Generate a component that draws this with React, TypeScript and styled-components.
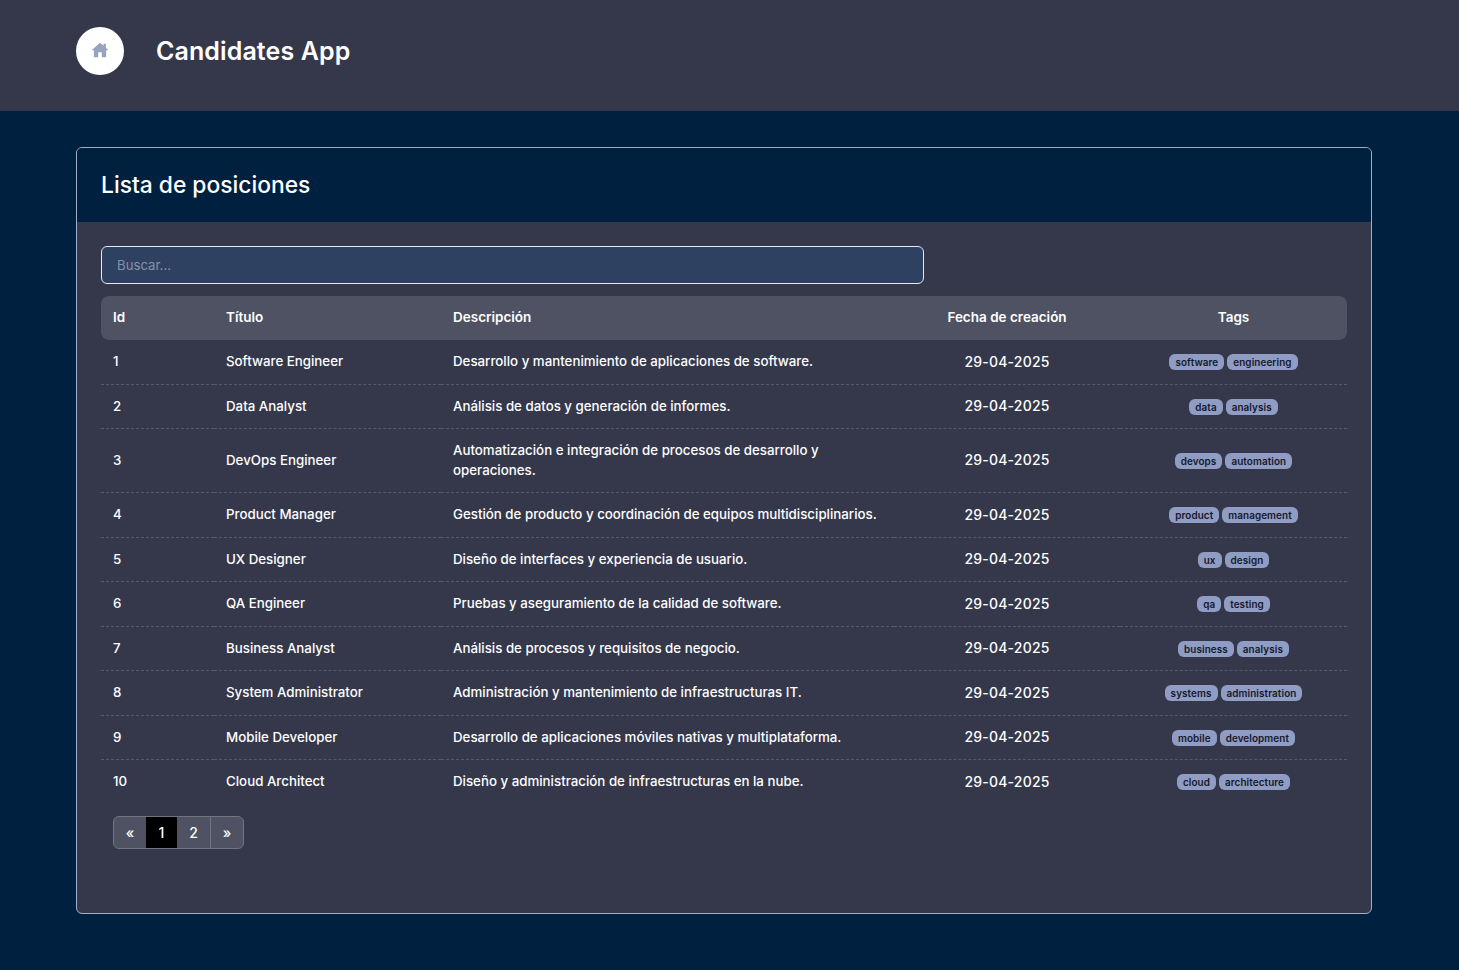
import React from 'react';
import styled, { createGlobalStyle } from 'styled-components';

const GlobalStyle = createGlobalStyle`
  html, body {
    margin: 0;
    padding: 0;
    background: #00203f;
    font-family: 'Inter', 'Open Sans', sans-serif;
    color: #ffffff;
  }
`;

const Page = styled.div`
  min-height: 970px;
  background: #00203f;
`;
const Topbar = styled.header`
  display: flex;
  align-items: center;
  gap: 32px;
  height: 111px;
  padding: 0 76px 9px;
  box-sizing: border-box;
  background: #35384b;
`;
const HomeButton = styled.div`
  display: flex;
  align-items: center;
  justify-content: center;
  width: 48px;
  height: 48px;
  padding-bottom: 2px;
  box-sizing: border-box;
  border-radius: 50%;
  background: #ffffff;
  color: #97a3bf;
`;
const AppTitle = styled.h1`
  margin: 0;
  font-size: 25px;
  line-height: 32px;
  font-weight: 600;
  letter-spacing: 0.1px;
`;
const Main = styled.main`
  padding: 36px 87px 0 76px;
`;
const Card = styled.section`
  height: 767px;
  box-sizing: border-box;
  border: 1px solid #a0aec8;
  border-radius: 6px;
  background: #35384b;
  overflow: hidden;
`;
const CardHeader = styled.div`
  display: flex;
  align-items: center;
  height: 74px;
  padding: 0 24px 1px;
  box-sizing: border-box;
  background: #00203f;
`;
const CardTitle = styled.h2`
  margin: 0;
  font-size: 22.8px;
  font-weight: 500;
`;
const CardBody = styled.div`
  padding: 24px 24px 0;
`;
const SearchInput = styled.input`
  display: block;
  width: 823px;
  height: 38px;
  box-sizing: border-box;
  margin-bottom: 12px;
  padding: 0 15px;
  border: 1px solid #e4e8f2;
  border-radius: 6px;
  outline: none;
  background: #2f4160;
  color: #ffffff;
  font: 400 13.2px 'Inter', sans-serif;
  &::placeholder {
    color: #8491ab;
    opacity: 1;
  }
`;
const Table = styled.table`
  width: 1246px;
  table-layout: fixed;
  border-collapse: separate;
  border-spacing: 0;
  font-size: 13.3px;
  line-height: 19.5px;
`;
const HeadCell = styled.th<{ $center?: boolean }>`
  height: 44px;
  box-sizing: border-box;
  padding: 0 12px;
  background: #4e5263;
  font-size: 13.5px;
  font-weight: 600;
  text-align: ${(p) => (p.$center ? 'center' : 'left')};
  &:first-child {
    border-radius: 8px 0 0 8px;
  }
  &:last-child {
    border-radius: 0 8px 8px 0;
  }
`;
const Row = styled.tr`
  &:last-child td {
    border-bottom: none;
  }
`;
const Cell = styled.td<{ $center?: boolean }>`
  padding: 12px;
  border-bottom: 1px dashed #55596c;
  font-weight: 500;
  text-align: ${(p) => (p.$center ? 'center' : 'left')};
`;
const DateText = styled.div`
  margin: -0.5px 0 0.5px;
  font-size: 14px;
  letter-spacing: 0.2px;
`;
const TagList = styled.div`
  display: flex;
  justify-content: center;
  gap: 3px;
  padding-top: 2px;
  height: 19.5px;
  box-sizing: border-box;
`;
const Tag = styled.span`
  padding: 0 6px;
  height: 16px;
  border-radius: 6px;
  background: #8f9cc3;
  color: #15182a;
  font-size: 9.9px;
  line-height: 16px;
  font-weight: 600;
  letter-spacing: 0.1px;
`;
const Pagination = styled.nav`
  display: flex;
  width: fit-content;
  height: 33px;
  margin: 12px 0 0 12px;
  box-sizing: border-box;
  border: 1px solid #71757f;
  border-radius: 6px;
  background: #4e5263;
  overflow: hidden;
`;
const PageButton = styled.button<{ $width: number; $active?: boolean; $divider?: boolean }>`
  width: ${(p) => p.$width}px;
  padding: 0;
  border: none;
  border-right: ${(p) => (p.$divider ? '1px solid #71757f' : 'none')};
  background: ${(p) => (p.$active ? '#000000' : 'transparent')};
  color: #ffffff;
  font: 500 14px 'Inter', sans-serif;
`;

const HomeIcon = () => (
  <svg width="18" height="18" viewBox="0 0 16 16" fill="currentColor" aria-hidden="true">
    <path d="M8 1.5 0.5 8.2H2.5V14.5H6.4V10H9.6V14.5H13.5V8.2H15.5L13.2 6.1V2.4H11.2V4.3Z" />
  </svg>
);

const positions = [
  ['Software Engineer', 'Desarrollo y mantenimiento de aplicaciones de software.', 'software', 'engineering'],
  ['Data Analyst', 'Análisis de datos y generación de informes.', 'data', 'analysis'],
  ['DevOps Engineer', 'Automatización e integración de procesos de desarrollo y operaciones.', 'devops', 'automation'],
  ['Product Manager', 'Gestión de producto y coordinación de equipos multidisciplinarios.', 'product', 'management'],
  ['UX Designer', 'Diseño de interfaces y experiencia de usuario.', 'ux', 'design'],
  ['QA Engineer', 'Pruebas y aseguramiento de la calidad de software.', 'qa', 'testing'],
  ['Business Analyst', 'Análisis de procesos y requisitos de negocio.', 'business', 'analysis'],
  ['System Administrator', 'Administración y mantenimiento de infraestructuras IT.', 'systems', 'administration'],
  ['Mobile Developer', 'Desarrollo de aplicaciones móviles nativas y multiplataforma.', 'mobile', 'development'],
  ['Cloud Architect', 'Diseño y administración de infraestructuras en la nube.', 'cloud', 'architecture'],
];

const App = () => {
  return (
    <Page>
      <GlobalStyle />
      <Topbar>
        <HomeButton>
          <HomeIcon />
        </HomeButton>
        <AppTitle>Candidates App</AppTitle>
      </Topbar>
      <Main>
        <Card>
          <CardHeader>
            <CardTitle>Lista de posiciones</CardTitle>
          </CardHeader>
          <CardBody>
            <SearchInput placeholder="Buscar..." />
            <Table>
              <colgroup>
                <col style={{ width: '113px' }} />
                <col style={{ width: '227px' }} />
                <col style={{ width: '453px' }} />
                <col style={{ width: '226px' }} />
                <col style={{ width: '227px' }} />
              </colgroup>
              <thead>
                <tr>
                  <HeadCell>Id</HeadCell>
                  <HeadCell>Título</HeadCell>
                  <HeadCell>Descripción</HeadCell>
                  <HeadCell $center>Fecha de creación</HeadCell>
                  <HeadCell $center>Tags</HeadCell>
                </tr>
              </thead>
              <tbody>
                {positions.map(([title, desc, tagA, tagB], i) => (
                  <Row key={title}>
                    <Cell>{i + 1}</Cell>
                    <Cell>{title}</Cell>
                    <Cell>{desc}</Cell>
                    <Cell $center>
                      <DateText>29-04-2025</DateText>
                    </Cell>
                    <Cell $center>
                      <TagList>
                        <Tag>{tagA}</Tag>
                        <Tag>{tagB}</Tag>
                      </TagList>
                    </Cell>
                  </Row>
                ))}
              </tbody>
            </Table>
            <Pagination>
              <PageButton $width={32}>«</PageButton>
              <PageButton $width={31} $active>1</PageButton>
              <PageButton $width={34} $divider>2</PageButton>
              <PageButton $width={32}>»</PageButton>
            </Pagination>
          </CardBody>
        </Card>
      </Main>
    </Page>
  );
};

export default App;
